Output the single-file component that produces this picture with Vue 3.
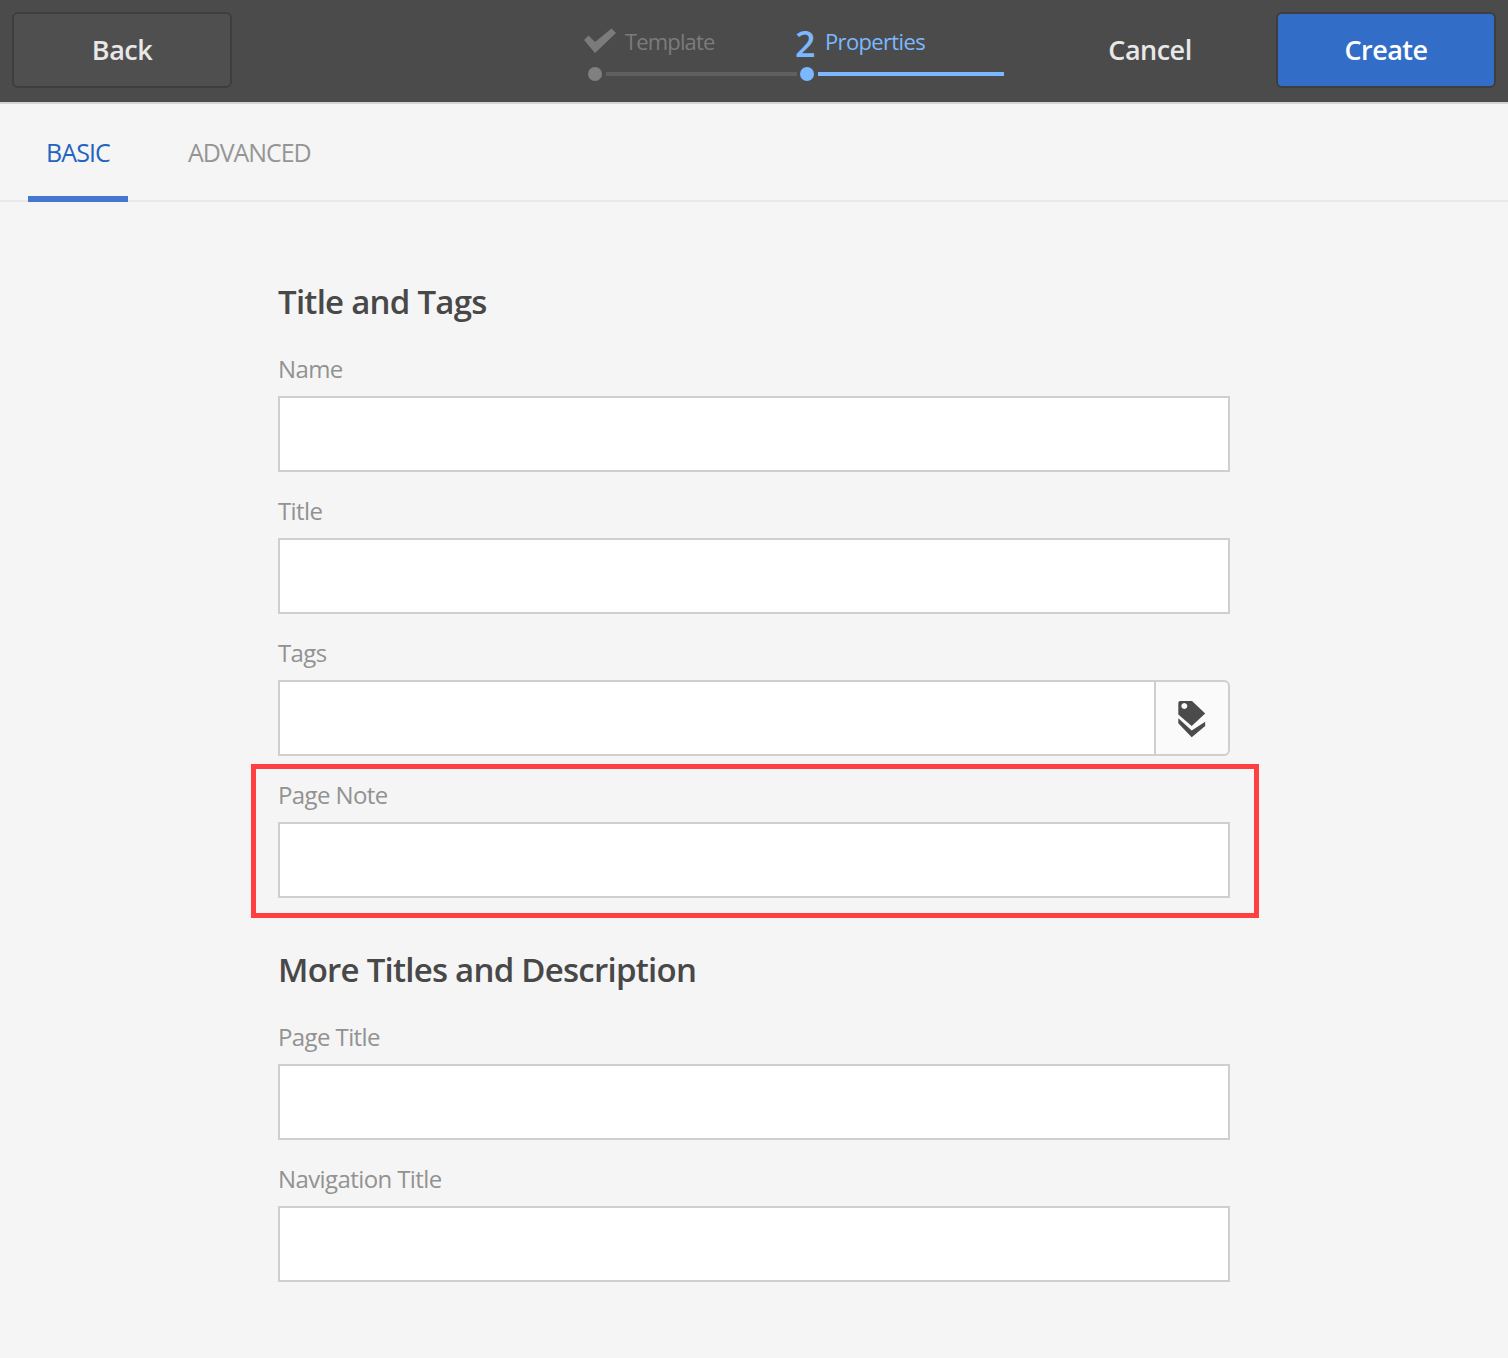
<script setup>
const firstFields = [
  { label: 'Name' },
  { label: 'Title' },
  { label: 'Tags', tag: true },
  { label: 'Page Note', marked: true },
]
const secondFields = [{ label: 'Page Title' }, { label: 'Navigation Title' }]
</script>

<template>
  <div class="page">
    <header class="topbar">
      <button class="btn back">Back</button>
      <div class="stepper">
        <div class="step done">
          <div class="step-head">
            <svg class="check" width="34" height="30" viewBox="0 0 34 30">
              <path d="M0 12 L4.500 7.500 L11 14 L27.500 0.500 L32 5 L11 25 Z" fill="#7b7b7b" />
            </svg>
            <span class="step-label">Template</span>
          </div>
          <div class="step-track">
            <span class="dot"></span>
            <span class="line"></span>
          </div>
        </div>
        <div class="step current">
          <div class="step-head">
            <span class="num">2</span>
            <span class="step-label">Properties</span>
          </div>
          <div class="step-track">
            <span class="dot"></span>
            <span class="line"></span>
          </div>
        </div>
      </div>
      <button class="btn cancel">Cancel</button>
      <button class="btn create">Create</button>
    </header>

    <nav class="tabs">
      <div class="tab active">BASIC</div>
      <div class="tab">ADVANCED</div>
    </nav>

    <main class="form">
      <h2 class="heading">Title and Tags</h2>
      <div v-for="f in firstFields" :key="f.label" class="field" :class="{ marked: f.marked }">
        <label class="label">{{ f.label }}</label>
        <div class="control">
          <input class="input" type="text" />
          <button v-if="f.tag" class="tag-btn" aria-label="Select tags">
            <svg width="44" height="50" viewBox="0 0 44 50">
              <path fill-rule="evenodd" fill="#4b4b4b"
                d="M8.300 8 a2 2 0 0 1 2-2 H22 L35.200 18.500 L21.700 31 L8.300 19.500 Z M14.300 8 a3 3 0 1 0 0.010 0 Z" />
              <path fill="#4b4b4b" d="M8.300 23.300 L21.700 35.500 L35.200 26.700 L35.200 31 L21.700 42.300 L8.300 28.300 Z" />
            </svg>
          </button>
        </div>
      </div>

      <h2 class="heading second">More Titles and Description</h2>
      <div v-for="f in secondFields" :key="f.label" class="field">
        <label class="label">{{ f.label }}</label>
        <div class="control">
          <input class="input" type="text" />
        </div>
      </div>
    </main>
  </div>
</template>

<style>
html, body { margin: 0; background: #f5f5f5; }
</style>

<style scoped>
.page {
  width: 1508px;
  height: 1358px;
  overflow: hidden;
  background: #f5f5f5;
  font-family: "Open Sans", "Noto Sans", sans-serif;
}
.topbar {
  box-sizing: border-box;
  height: 104px;
  padding: 12px;
  display: flex;
  align-items: flex-start;
  background: #4b4b4b;
  border-bottom: 2px solid #d4d4d4;
}
.btn {
  box-sizing: border-box;
  width: 220px;
  height: 76px;
  border-radius: 6px;
  border: 2px solid #3e3e3e;
  font-family: inherit;
  font-size: 27px;
  font-weight: 600;
  letter-spacing: -0.5px;
  padding: 0 0 2px;
  color: #e8e8e8;
  background: #4f4f4f;
}
.stepper {
  display: flex;
  margin-left: 352px;
}
.step { width: 211px; color: #7b7b7b; }
.step.current { color: #7cb8ff; }
.step-head {
  height: 55px;
  display: flex;
  align-items: center;
}
.check { margin-right: 7px; margin-top: 6px; }
.step-label {
  font-size: 22px;
  font-weight: 500;
  letter-spacing: -0.85px;
  margin-top: 3px;
}
.current .step-label { letter-spacing: -0.65px; }
.num {
  font-size: 36px;
  font-weight: 600;
  line-height: 50px;
  width: 30px;
  margin-top: 9px;
}
.step-track {
  display: flex;
  align-items: center;
  height: 14px;
}
.dot {
  width: 14px;
  height: 14px;
  border-radius: 50%;
  background: #808080;
  margin-left: 4px;
  flex: none;
}
.line {
  height: 4px;
  width: 191px;
  margin-left: 4px;
  background: #5f5f5f;
  flex: none;
}
.current .dot { background: #7cb8ff; margin-left: 5px; }
.current .line { background: #7cb8ff; width: 186px; }
.btn.cancel {
  width: 160px;
  margin-left: auto;
  margin-right: 46px;
  background: transparent;
  border-color: transparent;
}
.btn.create {
  background: #326ec8;
  color: #fff;
}
.tabs {
  box-sizing: border-box;
  height: 98px;
  display: flex;
  padding-left: 28px;
  border-bottom: 2px solid #e9e9e9;
}
.tab {
  height: 98px;
  box-sizing: border-box;
  padding-top: 28px;
  font-size: 25px;
  font-weight: 500;
  line-height: 40px;
  letter-spacing: -1.1px;
  color: #959595;
  margin-left: 60px;
}
.tab.active {
  width: 100px;
  text-align: center;
  margin-left: 0;
  color: #2264c0;
  letter-spacing: -0.9px;
  border-bottom: 6px solid #4478d0;
}
.form {
  width: 952px;
  margin-left: 278px;
  padding-top: 80px;
}
.heading {
  margin: 0 0 28px;
  font-size: 33px;
  line-height: 40px;
  font-weight: 600;
  letter-spacing: -0.75px;
  color: #484848;
}
.heading.second { margin-top: 52px; }
.field {
  position: relative;
  margin-bottom: 20px;
}
.field.marked::after {
  content: "";
  position: absolute;
  left: -27px;
  right: -29px;
  top: -12px;
  bottom: -20px;
  border: 5px solid #ff4040;
  pointer-events: none;
  box-sizing: border-box;
}
.label {
  display: block;
  height: 38px;
  line-height: 38px;
  margin-bottom: 8px;
  font-size: 24px;
  font-weight: 500;
  letter-spacing: -0.6px;
  color: #929292;
}
.control { display: flex; height: 76px; }
.input {
  flex: 1;
  min-width: 0;
  box-sizing: border-box;
  height: 76px;
  margin: 0;
  background: #fff;
  border: 2px solid #cfcfcf;
  border-radius: 0;
  outline: none;
}
.tag-btn {
  box-sizing: border-box;
  width: 74px;
  height: 76px;
  padding: 4px 0 0;
  margin: 0;
  display: flex;
  align-items: center;
  justify-content: center;
  background: #fafafa;
  border: 2px solid #cfcfcf;
  border-left: 0;
  border-radius: 0 6px 6px 0;
}
</style>
